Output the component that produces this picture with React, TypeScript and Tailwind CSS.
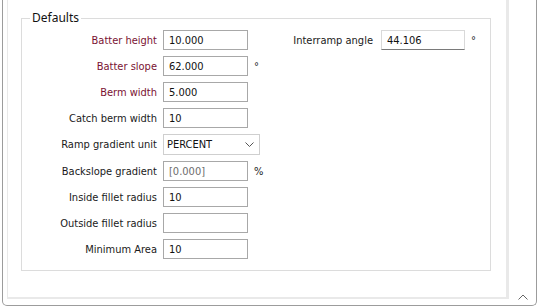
import React from "react";

const font = { fontFamily: '"DejaVu Sans Condensed", "Liberation Sans", sans-serif' };

function Row({
  label,
  value,
  red,
  unit,
  muted,
}: {
  label: string;
  value: string;
  red?: boolean;
  unit?: string;
  muted?: boolean;
}) {
  return (
    <div className="flex items-center h-[20px]">
      <div
        className={`w-[135px] shrink-0 text-right text-[11px] leading-none whitespace-nowrap ${
          red ? "text-[#7a1232]" : "text-[#1a1a1a]"
        }`}
      >
        {label}
      </div>
      <div
        className={`ml-[6px] w-[85px] h-[20px] shrink-0 border border-[#a8a8a8] bg-white flex items-center pl-[5px] text-[11px] leading-none ${
          muted ? "text-[#6d6d6d]" : "text-[#111]"
        }`}
      >
        {value}
      </div>
      {unit && (
        <div className="ml-[6px] shrink-0 text-[11px] leading-none text-[#222]">
          {unit}
        </div>
      )}
    </div>
  );
}

export default function App() {
  return (
    <div className="w-[537px] h-[308px] bg-white overflow-hidden" style={font}>
      <div className="ml-[2px] w-[535px] h-[306px] border-l border-r border-b border-[#9c9c9c] rounded-b-[5px] flex">
        <div className="ml-[4px] w-[502px] h-[299px] border-l border-b-2 border-r-[3px] border-[#e9e9e9] pl-[13px] pt-[18px]">
          <div className="relative w-[470px] h-[253px] border border-[#dcdcdc] pt-[11px] flex">
            <div className="absolute left-[8px] top-[-9px] bg-white px-[2px] text-[12px] leading-[16px] text-[#111]" style={{ fontFamily: '"Noto Sans", "Open Sans", sans-serif' }}>
              Defaults
            </div>
            <div className="w-[236px] shrink-0 flex flex-col gap-[6px]">
              <Row label="Batter height" value="10.000" red />
              <Row label="Batter slope" value="62.000" red unit="°" />
              <Row label="Berm width" value="5.000" red />
              <Row label="Catch berm width" value="10" />
              <div className="flex items-center h-[21px]">
                <div className="w-[135px] shrink-0 text-right text-[11px] leading-none text-[#1a1a1a]">
                  Ramp gradient unit
                </div>
                <div className="ml-[6px] w-[97px] h-[21px] shrink-0 border border-[#cfcfcf] bg-white flex items-center pl-[3px] pr-[5px] text-[11px] leading-none text-[#111]">
                  <span className="flex-1">PERCENT</span>
                  <svg width="9" height="5" viewBox="0 0 9 5">
                    <polyline points="0.5,0.5 4.5,4.5 8.5,0.5" fill="none" stroke="#555" strokeWidth="1" />
                  </svg>
                </div>
              </div>
              <Row label="Backslope gradient" value="[0.000]" muted unit="%" />
              <Row label="Inside fillet radius" value="10" />
              <Row label="Outside fillet radius" value="" />
              <Row label="Minimum Area" value="10" />
            </div>
            <div className="flex items-start">
              <div className="flex items-center h-[20px]">
                <div className="w-[115px] shrink-0 text-right text-[11px] leading-none text-[#1a1a1a]">
                  Interramp angle
                </div>
                <div className="ml-[8px] w-[84px] h-[20px] shrink-0 border border-[#d9d9d9] border-b-[#7a7a7a] bg-white flex items-center pl-[5px] text-[11px] leading-none text-[#111]">
                  44.106
                </div>
                <div className="ml-[6px] text-[11px] leading-none text-[#222]">°</div>
              </div>
            </div>
          </div>
        </div>
        <div className="flex-1 flex items-end justify-center pb-[5px]">
          <svg width="10" height="6" viewBox="0 0 10 6">
            <polyline points="0.5,5.5 5,1 9.5,5.5" fill="none" stroke="#666" strokeWidth="1" />
          </svg>
        </div>
      </div>
    </div>
  );
}
